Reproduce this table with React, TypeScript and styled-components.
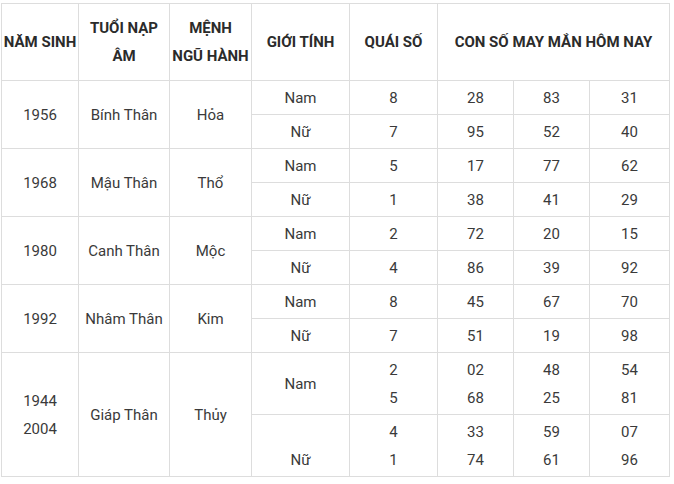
import React from "react";
import styled, { createGlobalStyle } from "styled-components";

const GlobalStyle = createGlobalStyle`
  html, body {
    margin: 0;
    padding: 0;
    background: #ffffff;
  }
  body {
    font-family: Roboto, "Noto Sans", "Liberation Sans", sans-serif;
    color: #333333;
  }
`;

const Page = styled.div`
  padding: 3px 0 0 1px;
`;

const Table = styled.table`
  width: 668px;
  border-collapse: collapse;
  table-layout: fixed;
  font-size: 15px;
  line-height: 28px;
`;

const Col = styled.col<{ $w: number }>`
  width: ${(p) => p.$w}px;
`;

const HeadCell = styled.th`
  border: 1px solid #dddddd;
  padding: 10px 0;
  font-weight: 700;
  color: #2b2b2b;
  text-align: center;
  vertical-align: middle;
  white-space: nowrap;
`;

const Cell = styled.td<{ $valign?: "middle" | "bottom" }>`
  border: 1px solid #dddddd;
  padding: 3px 2px 2px;
  text-align: center;
  vertical-align: ${(p) => p.$valign ?? "middle"};
  color: #3a3a3a;
`;

type Gender = { label: string; quai: string[]; nums: string[][]; valign?: "bottom" };

type Group = {
  years: string[];
  tuoi: string;
  menh: string;
  rows: Gender[];
};

const columns = [77, 91, 82, 98, 88, 76, 76, 80];

const groups: Group[] = [
  {
    years: ["1956"],
    tuoi: "Bính Thân",
    menh: "Hỏa",
    rows: [
      { label: "Nam", quai: ["8"], nums: [["28"], ["83"], ["31"]] },
      { label: "Nữ", quai: ["7"], nums: [["95"], ["52"], ["40"]] },
    ],
  },
  {
    years: ["1968"],
    tuoi: "Mậu Thân",
    menh: "Thổ",
    rows: [
      { label: "Nam", quai: ["5"], nums: [["17"], ["77"], ["62"]] },
      { label: "Nữ", quai: ["1"], nums: [["38"], ["41"], ["29"]] },
    ],
  },
  {
    years: ["1980"],
    tuoi: "Canh Thân",
    menh: "Mộc",
    rows: [
      { label: "Nam", quai: ["2"], nums: [["72"], ["20"], ["15"]] },
      { label: "Nữ", quai: ["4"], nums: [["86"], ["39"], ["92"]] },
    ],
  },
  {
    years: ["1992"],
    tuoi: "Nhâm Thân",
    menh: "Kim",
    rows: [
      { label: "Nam", quai: ["8"], nums: [["45"], ["67"], ["70"]] },
      { label: "Nữ", quai: ["7"], nums: [["51"], ["19"], ["98"]] },
    ],
  },
  {
    years: ["1944", "2004"],
    tuoi: "Giáp Thân",
    menh: "Thủy",
    rows: [
      { label: "Nam", quai: ["2", "5"], nums: [["02", "68"], ["48", "25"], ["54", "81"]] },
      {
        label: "Nữ",
        quai: ["4", "1"],
        nums: [["33", "74"], ["59", "61"], ["07", "96"]],
        valign: "bottom",
      },
    ],
  },
];

function Lines({ items }: { items: string[] }) {
  return (
    <>
      {items.map((t, i) => (
        <React.Fragment key={i}>
          {i > 0 && <br />}
          {t}
        </React.Fragment>
      ))}
    </>
  );
}

export default function App() {
  return (
    <Page>
      <GlobalStyle />
      <Table>
        <colgroup>
          {columns.map((w, i) => (
            <Col key={i} $w={w} />
          ))}
        </colgroup>
        <thead>
          <tr>
            <HeadCell>NĂM SINH</HeadCell>
            <HeadCell>
              TUỔI NẠP
              <br />
              ÂM
            </HeadCell>
            <HeadCell>
              MỆNH
              <br />
              NGŨ HÀNH
            </HeadCell>
            <HeadCell>GIỚI TÍNH</HeadCell>
            <HeadCell>QUÁI SỐ</HeadCell>
            <HeadCell colSpan={3}>CON SỐ MAY MẮN HÔM NAY</HeadCell>
          </tr>
        </thead>
        <tbody>
          {groups.map((g) =>
            g.rows.map((r, ri) => (
              <tr key={g.tuoi + r.label}>
                {ri === 0 && (
                  <>
                    <Cell rowSpan={g.rows.length}>
                      <Lines items={g.years} />
                    </Cell>
                    <Cell rowSpan={g.rows.length}>{g.tuoi}</Cell>
                    <Cell rowSpan={g.rows.length}>{g.menh}</Cell>
                  </>
                )}
                <Cell $valign={r.valign}>{r.label}</Cell>
                <Cell>
                  <Lines items={r.quai} />
                </Cell>
                {r.nums.map((n, ni) => (
                  <Cell key={ni}>
                    <Lines items={n} />
                  </Cell>
                ))}
              </tr>
            ))
          )}
        </tbody>
      </Table>
    </Page>
  );
}
